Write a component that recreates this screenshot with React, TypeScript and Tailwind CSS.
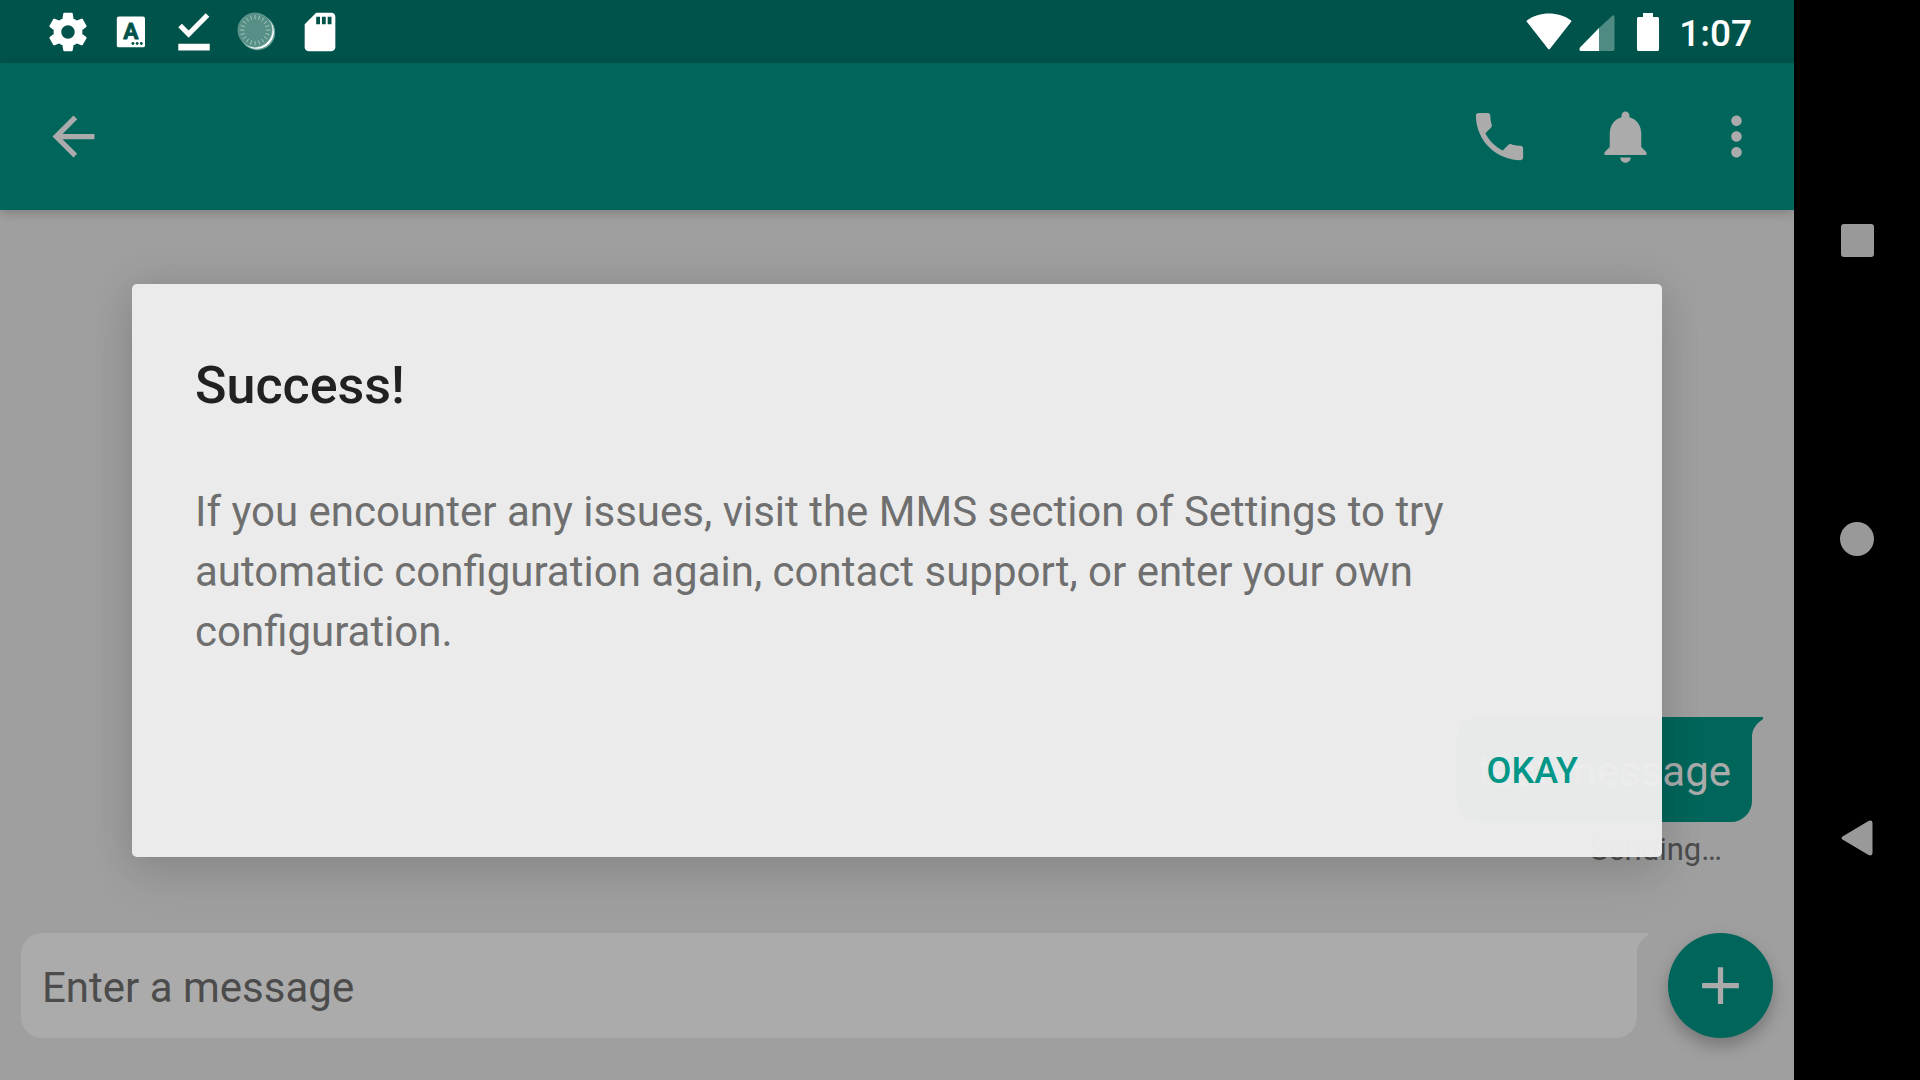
import React from "react";

function Material({ d }: { d: string }) {
  return (
    <svg viewBox="0 0 24 24" className="size-[63px] shrink-0" fill="currentColor" aria-hidden="true">
      <path d={d} />
    </svg>
  );
}

function StatusIcon({ children }: { children: React.ReactNode }) {
  return (
    <svg viewBox="0 0 24 24" className="size-[46px] shrink-0" fill="currentColor" aria-hidden="true">
      {children}
    </svg>
  );
}

const ticks = Array.from({ length: 20 }, (_, i) => {
  const a = (i * Math.PI) / 10;
  return {
    x1: 11 + 5.6 * Math.cos(a),
    y1: 11 + 5.6 * Math.sin(a),
    x2: 11 + 8 * Math.cos(a),
    y2: 11 + 8 * Math.sin(a),
  };
});

function StatusBar() {
  return (
    <div className="flex h-[63px] items-center justify-between bg-[#00534a] pl-[45px] pr-[42px] text-white">
      <div className="flex items-center gap-[17px]">
        <StatusIcon>
          <path d="M19.43 12.98c.04-.32.07-.64.07-.98s-.03-.66-.07-.98l2.11-1.65c.19-.15.24-.42.12-.64l-2-3.46c-.12-.22-.39-.3-.61-.22l-2.49 1c-.52-.4-1.08-.73-1.69-.98l-.38-2.65C14.46 2.18 14.25 2 14 2h-4c-.25 0-.46.18-.49.42l-.38 2.65c-.61.25-1.17.59-1.69.98l-2.49-1c-.23-.09-.49 0-.61.22l-2 3.46c-.13.22-.07.49.12.64l2.11 1.65c-.04.32-.07.65-.07.98s.03.66.07.98l-2.11 1.65c-.19.15-.24.42-.12.64l2 3.46c.12.22.39.3.61.22l2.49-1c.52.4 1.08.73 1.69.98l.38 2.65c.03.24.24.42.49.42h4c.25 0 .46-.18.49-.42l.38-2.65c.61-.25 1.17-.59 1.69-.98l2.49 1c.23.09.49 0 .61-.22l2-3.46c.12-.22.07-.49-.12-.64l-2.11-1.65zM12 15.5c-1.93 0-3.5-1.57-3.5-3.5s1.57-3.5 3.5-3.5 3.5 1.57 3.5 3.5-1.57 3.5-3.5 3.5z" />
        </StatusIcon>
        <StatusIcon>
          <rect x="4.6" y="3.9" width="14.7" height="16.1" rx="1" />
          <text
            x="11.9"
            y="15.7"
            textAnchor="middle"
            fontSize="11.8"
            stroke="#00534a"
            strokeWidth=".4"
            strokeLinejoin="round"
            className="fill-[#00534a] font-bold"
          >
            A
          </text>
          <circle cx="13" cy="18" r=".75" fill="#00534a" />
          <circle cx="15.2" cy="18" r=".75" fill="#00534a" />
          <circle cx="17.4" cy="18" r=".75" fill="#00534a" />
        </StatusIcon>
        <StatusIcon>
          <path d="M3.8 9.5 5.7 7.7 9.2 11.2 18.1 2.2 20 4.1 9.2 15zM3.8 18.1h16.4v3.5H3.8z" />
        </StatusIcon>
        <StatusIcon>
          <circle cx="12.2" cy="12.2" r="9.3" fill="#6ba199" />
          <circle cx="11.9" cy="11.9" r="8.9" />
          <circle cx="11" cy="11" r="8.9" fill="#558f86" stroke="#6ba199" strokeWidth=".4" />
          {ticks.map((t, i) => (
            <line key={i} {...t} stroke="#a3c4bf" strokeWidth=".5" />
          ))}
        </StatusIcon>
        <StatusIcon>
          <path d="M18 2h-8L4.02 8 4 20c0 1.1.9 2 2 2h12c1.1 0 2-.9 2-2V4c0-1.1-.9-2-2-2zm-6 6h-2V4h2v4zm3 0h-2V4h2v4zm3 0h-2V4h2v4z" />
        </StatusIcon>
      </div>
      <div className="flex items-center">
        <svg viewBox="0 0 46 38" className="mr-[7px] h-[38px] w-[46px]" fill="currentColor" aria-hidden="true">
          <path d="M1 9Q0 8 1.200 7.200C13-1.800 33-1.800 44.800 7.200Q46 8 45 9L24.200 35.500Q23 37.500 21.800 35.500z" />
        </svg>
        <svg viewBox="0 0 36 38" className="mr-[22px] h-[38px] w-[36px]" fill="currentColor" aria-hidden="true">
          <path d="M32.500 3.500Q35.500 1 35.500 4V36Q35.500 38 33.500 38H20V15z" fill="#4f8b83" />
          <path d="M20 15V38H2Q-.5 38 1 34.500z" />
        </svg>
        <svg viewBox="0 0 22 38" className="mr-[20px] h-[38px] w-[22px]" fill="currentColor" aria-hidden="true">
          <path d="M6 0H16V4H20.500Q22 4 22 5.500V36.500Q22 38 20.500 38H1.500Q0 38 0 36.500V5.500Q0 4 1.500 4H6z" />
        </svg>
        <time className="pt-[5px] text-[37px] leading-[44px] font-medium">1:07</time>
      </div>
    </div>
  );
}

function AppBar() {
  return (
    <header className="relative flex h-[147px] items-center bg-[#00665b] pl-[42px] pr-[10px] text-[#ababab] shadow-[0_3px_10px_rgba(0,0,0,0.2)]">
      <button aria-label="Back">
        <Material d="M20 11H7.830l5.590-5.590L12 4l-8 8 8 8 1.410-1.410L7.830 13H20v-2z" />
      </button>
      <div className="ml-auto flex">
        <button aria-label="Call" className="flex w-[126px] justify-center">
          <Material d="M6.620 10.790c1.440 2.830 3.760 5.140 6.590 6.590l2.200-2.200c.27-.27.67-.36 1.020-.24 1.120.37 2.330.57 3.570.57.55 0 1 .45 1 1V20c0 .55-.45 1-1 1-9.390 0-17-7.610-17-17 0-.55.45-1 1-1h3.500c.55 0 1 .45 1 1 0 1.250.2 2.450.57 3.570.11.35.03.74-.25 1.020l-2.200 2.200z" />
        </button>
        <button aria-label="Notifications" className="flex w-[126px] justify-center">
          <Material d="M12 22c1.100 0 2-.9 2-2h-4c0 1.100.89 2 2 2zm6-6v-5c0-3.070-1.640-5.640-4.500-6.320V4c0-.83-.67-1.500-1.500-1.500s-1.500.67-1.500 1.500v.68C7.630 5.360 6 7.920 6 11v5l-2 2v1h16v-1l-2-2z" />
        </button>
        <button aria-label="More options" className="flex w-[96px] justify-center">
          <Material d="M12 8c1.100 0 2-.9 2-2s-.9-2-2-2-2 .9-2 2 .9 2 2 2zm0 2c-1.100 0-2 .9-2 2s.9 2 2 2 2-.9 2-2-.9-2-2-2zm0 6c-1.100 0-2 .9-2 2s.9 2 2 2 2-.9 2-2-.9-2-2-2z" />
        </button>
      </div>
    </header>
  );
}

function Tail() {
  return (
    <svg viewBox="0 0 11 21" className="h-[21px] w-[11px] shrink-0" fill="currentColor" aria-hidden="true">
      <path d="M0 0H11V2C4 7 0 12 0 20z" />
    </svg>
  );
}

function Conversation() {
  return (
    <section className="flex flex-1 flex-col items-end justify-end pr-[31px] pb-[63px]">
      <div className="flex text-[#00665b]">
        <p className="rounded-[21px] rounded-tr-none bg-[#00665b] px-[21px] pt-[24px] pb-[20px] text-[42px] leading-[61px] text-[#ababab]">
          test message
        </p>
        <Tail />
      </div>
      <p className="mt-[8px] mr-[41px] text-[31px] leading-[40px] text-[#4c4c4c]">Sending…</p>
    </section>
  );
}

function Composer() {
  return (
    <form className="flex items-start gap-5 px-[21px] pb-[42px]" onSubmit={(e) => e.preventDefault()}>
      <div className="flex flex-1 text-[#ababab]">
        <input
          type="text"
          aria-label="Enter a message"
          placeholder="Enter a message"
          className="h-[105px] min-w-0 flex-1 rounded-[21px] rounded-tr-none bg-[#ababab] px-[21px] pt-[4px] text-[42px] text-[#222] placeholder:text-[#4c4c4c] placeholder:opacity-100"
        />
        <Tail />
      </div>
      <button
        aria-label="Add attachment"
        className="flex size-[105px] items-center justify-center rounded-full bg-[#00665b] text-[#ababab] shadow-[0_8px_16px_rgba(0,0,0,0.25)]"
      >
        <Material d="M19 13h-6v6h-2v-6H5v-2h6V5h2v6h6v2z" />
      </button>
    </form>
  );
}

function SuccessDialog() {
  return (
    <div className="absolute inset-0 flex items-center justify-center px-[132px] pt-[61px]">
      <div
        role="dialog"
        aria-modal="true"
        aria-labelledby="dialog-title"
        className="w-full rounded-[5px] bg-[rgba(237,237,237,0.98)] px-[63px] pt-[71px] pb-[23px] shadow-[0_24px_46px_rgba(0,0,0,0.08),0_0_40px_rgba(0,0,0,0.12)]"
      >
        <h1 id="dialog-title" className="text-[52px] leading-[62px] font-medium text-[#212121]">
          Success!
        </h1>
        <p className="mt-[65px] max-w-[1300px] text-[42px] leading-[60px] text-[#6f6f6f]">
          If you encounter any issues, visit the MMS section of Settings to try automatic configuration again,
          contact support, or enter your own configuration.
        </p>
        <div className="mt-[46px] flex justify-end">
          <button className="h-[126px] px-[21px] text-[36px] font-medium text-[#009688]">OKAY</button>
        </div>
      </div>
    </div>
  );
}

function NavigationBar() {
  return (
    <nav className="flex w-[126px] shrink-0 flex-col items-center justify-center bg-black pb-[2px] text-[#999]">
      <button aria-label="Recent apps" className="flex h-[299px] w-full items-center justify-center">
        <span className="size-[33px] rounded-[3px] bg-current" />
      </button>
      <button aria-label="Home" className="flex h-[299px] w-full items-center justify-center">
        <span className="size-[34px] rounded-full bg-current" />
      </button>
      <button aria-label="Back" className="flex h-[299px] w-full items-center justify-center">
        <svg viewBox="0 0 32 36" className="h-[36px] w-[32px]" fill="currentColor" aria-hidden="true">
          <path d="M1.500 16.500 27.500 1Q31.500-.5 31.500 3V33Q31.500 36.500 27.500 35L1.500 19.500Q-.5 18 1.500 16.500z" />
        </svg>
      </button>
    </nav>
  );
}

export default function App() {
  return (
    <div className="flex min-h-screen bg-[#9f9f9f] font-[Roboto,sans-serif]">
      <main className="relative flex min-w-0 flex-1 flex-col">
        <StatusBar />
        <AppBar />
        <Conversation />
        <Composer />
        <SuccessDialog />
      </main>
      <NavigationBar />
    </div>
  );
}
